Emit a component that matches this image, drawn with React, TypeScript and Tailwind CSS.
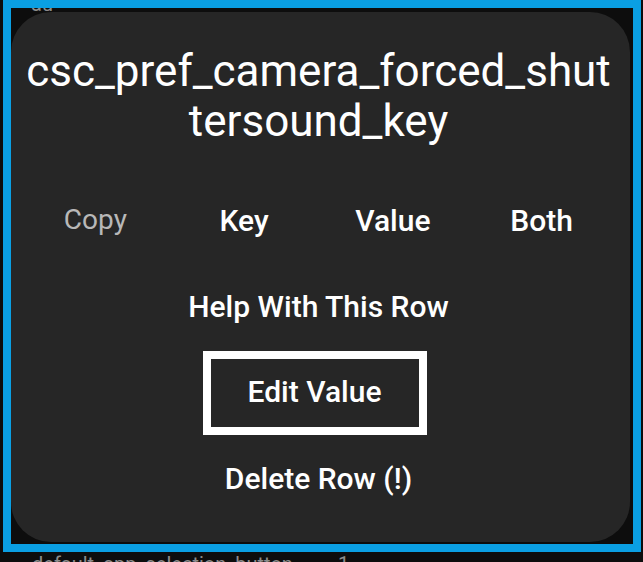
export default function App() {
  const options = [
    { label: "Copy", muted: true },
    { label: "Key" },
    { label: "Value" },
    { label: "Both" },
  ];

  return (
    <div className="relative w-[643px] h-[562px] overflow-hidden bg-[#0d0d0d] font-['Roboto','Liberation_Sans',sans-serif]">
      {/* list behind the dialog */}
      <div className="absolute left-[31px] top-[-8px] text-[20px] leading-[24px] text-[#8c8c8c]">
        au
      </div>
      <div className="absolute left-[32px] top-[552px] text-[20px] leading-[24px] text-[#8c8c8c]">
        default_app_selection_button
      </div>
      <div className="absolute left-[338px] top-[552px] text-[20px] leading-[24px] text-[#8c8c8c]">
        1
      </div>

      {/* dialog */}
      <div className="absolute left-[3px] top-0 w-[638px] h-[552px] border-[8px] border-[#0a9fe3] flex flex-col">
        <div className="flex-1 mt-[4px] mr-[3px] mb-[2px] rounded-[40px] bg-[#262626] flex flex-col items-center pl-[10px] pr-[14px]">
          <div className="mt-[34px] w-full text-center text-white text-[44px] leading-[50px] break-all">
            csc_pref_camera_forced_shuttersound_key
          </div>

          <div className="mt-[44px] w-full grid grid-cols-4 h-[60px] items-center">
            {options.map((o) => (
              <div
                key={o.label}
                className={
                  o.muted
                    ? "text-center text-[#b8b8b8] text-[28px]"
                    : "text-center text-white text-[30px] font-medium"
                }
              >
                {o.label}
              </div>
            ))}
          </div>

          <div className="mt-[26px] h-[60px] flex items-center text-white text-[30px] font-medium">
            Help With This Row
          </div>

          <div className="mt-[15px] mr-[8px] w-[224px] h-[84px] border-[8px] border-white flex items-center justify-center pb-[3px] text-white text-[30px] font-medium">
            Edit Value
          </div>

          <div className="mt-[13px] h-[60px] flex items-center text-white text-[30px] font-medium">
            Delete Row (!)
          </div>
        </div>
      </div>
    </div>
  );
}
